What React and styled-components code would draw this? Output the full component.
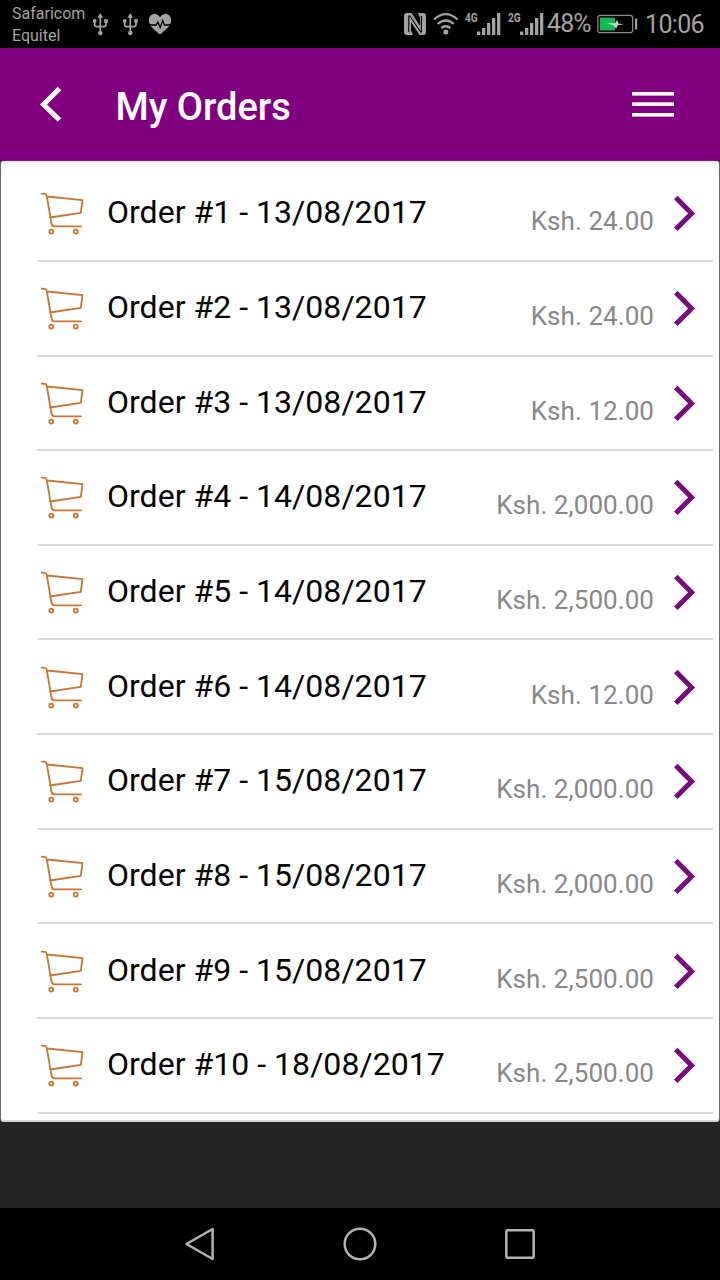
import React from "react";
import styled, { createGlobalStyle } from "styled-components";

const GlobalStyle = createGlobalStyle`
  * { box-sizing: border-box; }
  body { margin: 0; background: #000; font-family: Roboto, "Liberation Sans", sans-serif; }
  svg { display: block; flex: none; overflow: visible; }
`;

const Screen = styled.div`
  display: flex;
  flex-direction: column;
  width: 720px;
  height: 1280px;
  overflow: hidden;
  background: #242424;
`;

const StatusBar = styled.header`
  display: flex;
  justify-content: space-between;
  height: 48px;
  flex: none;
  padding: 0 16px 0 12px;
  background: #000;
  color: #a3a3a3;
`;

const StatusGroup = styled.div`
  display: flex;
  align-items: center;
`;

const Carriers = styled.div`
  width: 80px;
  padding-top: 2px;
  font-size: 16px;
  line-height: 22px;
`;

const StatusText = styled.span`
  font-size: 25px;
  line-height: 48px;
  padding-top: ${(p) => p.$drop || 0}px;
  width: ${(p) => p.$width}px;
  letter-spacing: ${(p) => p.$spacing || 0}px;
  white-space: nowrap;
`;

const Signal = styled.div`
  display: flex;
  align-items: flex-start;
  width: ${(p) => p.$width}px;
  height: 22px;
`;

const Network = styled.span`
  width: 12px;
  font-size: 13px;
  line-height: 10px;
  font-weight: 700;
  transform: scaleX(0.78);
  transform-origin: left;
`;

const TitleBar = styled.div`
  display: flex;
  align-items: center;
  height: 112px;
  flex: none;
  padding: 0 46px 0 39px;
  background: #800080;
`;

const Title = styled.h1`
  flex: 1;
  margin: 5px 0 0 54.5px;
  color: #fff;
  font-size: 38px;
  line-height: 46px;
  font-weight: 500;
`;

const Card = styled.main`
  height: 962px;
  flex: none;
  padding: 6.2px 6px 0 36px;
  background: #fff;
  border: 1px solid #6c6c6c;
  border-top-color: #5a305a;
  border-bottom: 2px solid #d5d5d5;
  border-radius: 4px;
  box-shadow: inset 0 2px 2px #eeddee;
`;

const OrderRow = styled.div`
  display: flex;
  align-items: flex-start;
  height: 94.67px;
  padding: 25.3px 18px 0 3px;
  border-bottom: 2px solid #dadada;
`;

const OrderName = styled.span`
  flex: 1;
  margin: 1px 0 0 23px;
  color: #050505;
  font-size: 32px;
  line-height: 38px;
  letter-spacing: 0.03px;
  white-space: nowrap;
`;

const Price = styled.span`
  margin: 14px 20px 0 0;
  color: #888;
  font-size: 26px;
  line-height: 30px;
  letter-spacing: 0.06px;
  white-space: nowrap;
`;

const NavBar = styled.nav`
  display: flex;
  justify-content: center;
  align-items: center;
  gap: 128px;
  height: 72px;
  flex: none;
  margin-top: auto;
  background: #000;
`;

const Usb = ({ width = 30 }) => (
  <svg width={width} height="24" viewBox={`0 0 ${width} 24`} fill="none" stroke="currentColor" strokeWidth="1.7">
    <path d="M8.3 4v16M2.6 9v3.3q0 2.4 2.4 2.4h6.6q2.4 0 2.4-2.4V9" />
    <g fill="currentColor" stroke="none">
      <path d="M8.3 1l2.9 4.8H5.4z" />
      <circle cx="8.3" cy="21" r="2.3" />
      <circle cx="2.7" cy="9" r="1.9" />
      <path d="M12.2 7.2h3.6v3.6h-3.6z" />
    </g>
  </svg>
);

const Heart = () => (
  <svg width="24" height="22" viewBox="0 0 24 22">
    <path d="M12 21.5C7 17 .8 13 .8 7.2.8 3.5 3.3 1 6.5 1 9 1 11 2.3 12 4.3 13 2.3 15 1 17.5 1c3.2 0 5.7 2.5 5.7 6.2C23.2 13 17 17 12 21.5z" fill="currentColor" />
    <path d="M1 12h7.2l1.6-3 2.4 5.5L14.6 7.5l1.8 4.5H23" fill="none" stroke="#000" strokeWidth="1.3" />
  </svg>
);

const Nfc = () => (
  <svg width="29" height="22" viewBox="0 0 29 22">
    <path d="M3 0h4.5l8.5 13V4.500L14 0h5q3 0 3 3v16q0 3-3 3h-3.500L7 9v8.500L9 22H3q-3 0-3-3V3q0-3 3-3z" fill="currentColor" />
    <path d="M4.800 2.500v16.800M17.400 19.500V2.700M5.500 2.500L17 19.500" fill="none" stroke="#000" strokeWidth="1.100" />
  </svg>
);

const Wifi = () => (
  <svg width="32" height="22" viewBox="0 0 32 22" fill="none" stroke="currentColor" strokeWidth="2.3">
    <path d="M1 6.500q11.800-10.800 23.600 0M4.700 11q8.100-7 16.200 0M8.300 15q4.500-3.600 9 0" />
    <circle cx="12.800" cy="19" r="2.500" fill="currentColor" stroke="none" />
  </svg>
);

const Bars = () => (
  <svg width="24" height="22" viewBox="0 0 24 22" fill="currentColor">
    <rect x="0" y="18.500" width="3.300" height="3.500" />
    <rect x="5" y="15" width="3.300" height="7" />
    <rect x="10" y="10" width="3.300" height="12" />
    <rect x="15" y="5" width="3.300" height="17" />
    <rect x="20" y="0" width="3.300" height="22" />
  </svg>
);

const Battery = () => (
  <svg width="48" height="20" viewBox="0 0 48 20">
    <rect x=".8" y="1.300" width="34.800" height="17.400" rx="2.500" fill="none" stroke="#888" strokeWidth="1.300" />
    <rect x="3" y="3.600" width="15" height="12.800" fill="#0dbd56" />
    <rect x="38" y="4.500" width="2.300" height="11" fill="#999" />
    <path d="M9.500 9l8.500.3L20 6l1.500 3.500 5.500 1-6 .5-2 4-2-3.500z" fill="#ccc" />
  </svg>
);

const BackIcon = () => (
  <svg width="22" height="36" viewBox="0 0 22 36">
    <path d="M20.500 2.500L4.500 18.500l16 15.500" fill="none" stroke="#fff" strokeWidth="5" />
  </svg>
);

const MenuIcon = () => (
  <svg width="42" height="26" viewBox="0 0 42 26" fill="#fff">
    <rect y="1" width="42" height="3.600" />
    <rect y="11.300" width="42" height="3.600" />
    <rect y="22" width="42" height="3.600" />
  </svg>
);

const Cart = () => (
  <svg width="44" height="44" viewBox="0 0 44 44" fill="none" stroke="#c9742f" strokeWidth="1.800" strokeLinejoin="round" strokeLinecap="round">
    <path d="M1.700 1.700l3.300.2q1.300.2 1.700 1.800L11.500 31.500q.5 2.800 3 2.800h26.500M7.300 4.500l35.200 3.700-1.700 12.600L10 25.500" />
    <circle cx="11.300" cy="39.600" r="2" />
    <circle cx="35.800" cy="39.600" r="2" />
  </svg>
);

const Chevron = () => (
  <svg width="21" height="44" viewBox="0 0 21 44">
    <path d="M1.800 5.600l15.800 15.800L1.800 37.200" fill="none" stroke="#780a7d" strokeWidth="5" />
  </svg>
);

const NavIcon = ({ children }) => (
  <svg width="32" height="34" viewBox="0 0 32 34" fill="none" stroke="#b2b2b2" strokeWidth="2.500" strokeLinejoin="round">
    {children}
  </svg>
);

const orders = [
  ["13/08/2017", "24.00"],
  ["13/08/2017", "24.00"],
  ["13/08/2017", "12.00"],
  ["14/08/2017", "2,000.00"],
  ["14/08/2017", "2,500.00"],
  ["14/08/2017", "12.00"],
  ["15/08/2017", "2,000.00"],
  ["15/08/2017", "2,000.00"],
  ["15/08/2017", "2,500.00"],
  ["18/08/2017", "2,500.00"],
];

export default function App() {
  return (
    <Screen>
      <GlobalStyle />
      <StatusBar>
        <StatusGroup>
          <Carriers>
            <div>Safaricom</div>
            <div>Equitel</div>
          </Carriers>
          <Usb />
          <Usb width={26} />
          <Heart />
        </StatusGroup>
        <StatusGroup>
          <Nfc />
          <Wifi />
          <Signal $width={43}>
            <Network>4G</Network>
            <Bars />
          </Signal>
          <Signal $width={39}>
            <Network>2G</Network>
            <Bars />
          </Signal>
          <StatusText $width={50} $spacing={-0.9}>48%</StatusText>
          <Battery />
          <StatusText $width={59} $spacing={-0.65} $drop={2}>10:06</StatusText>
        </StatusGroup>
      </StatusBar>
      <TitleBar>
        <BackIcon />
        <Title>My Orders</Title>
        <MenuIcon />
      </TitleBar>
      <Card>
        {orders.map(([date, amount], i) => (
          <OrderRow key={i}>
            <Cart />
            <OrderName>{`Order #${i + 1} - ${date}`}</OrderName>
            <Price>{`Ksh. ${amount}`}</Price>
            <Chevron />
          </OrderRow>
        ))}
      </Card>
      <NavBar>
        <NavIcon><path d="M28.600 2v30L2.500 17z" /></NavIcon>
        <NavIcon><circle cx="16" cy="17" r="15.300" /></NavIcon>
        <NavIcon><rect x="2.300" y="3.300" width="27.400" height="27.400" rx="1" /></NavIcon>
      </NavBar>
    </Screen>
  );
}
